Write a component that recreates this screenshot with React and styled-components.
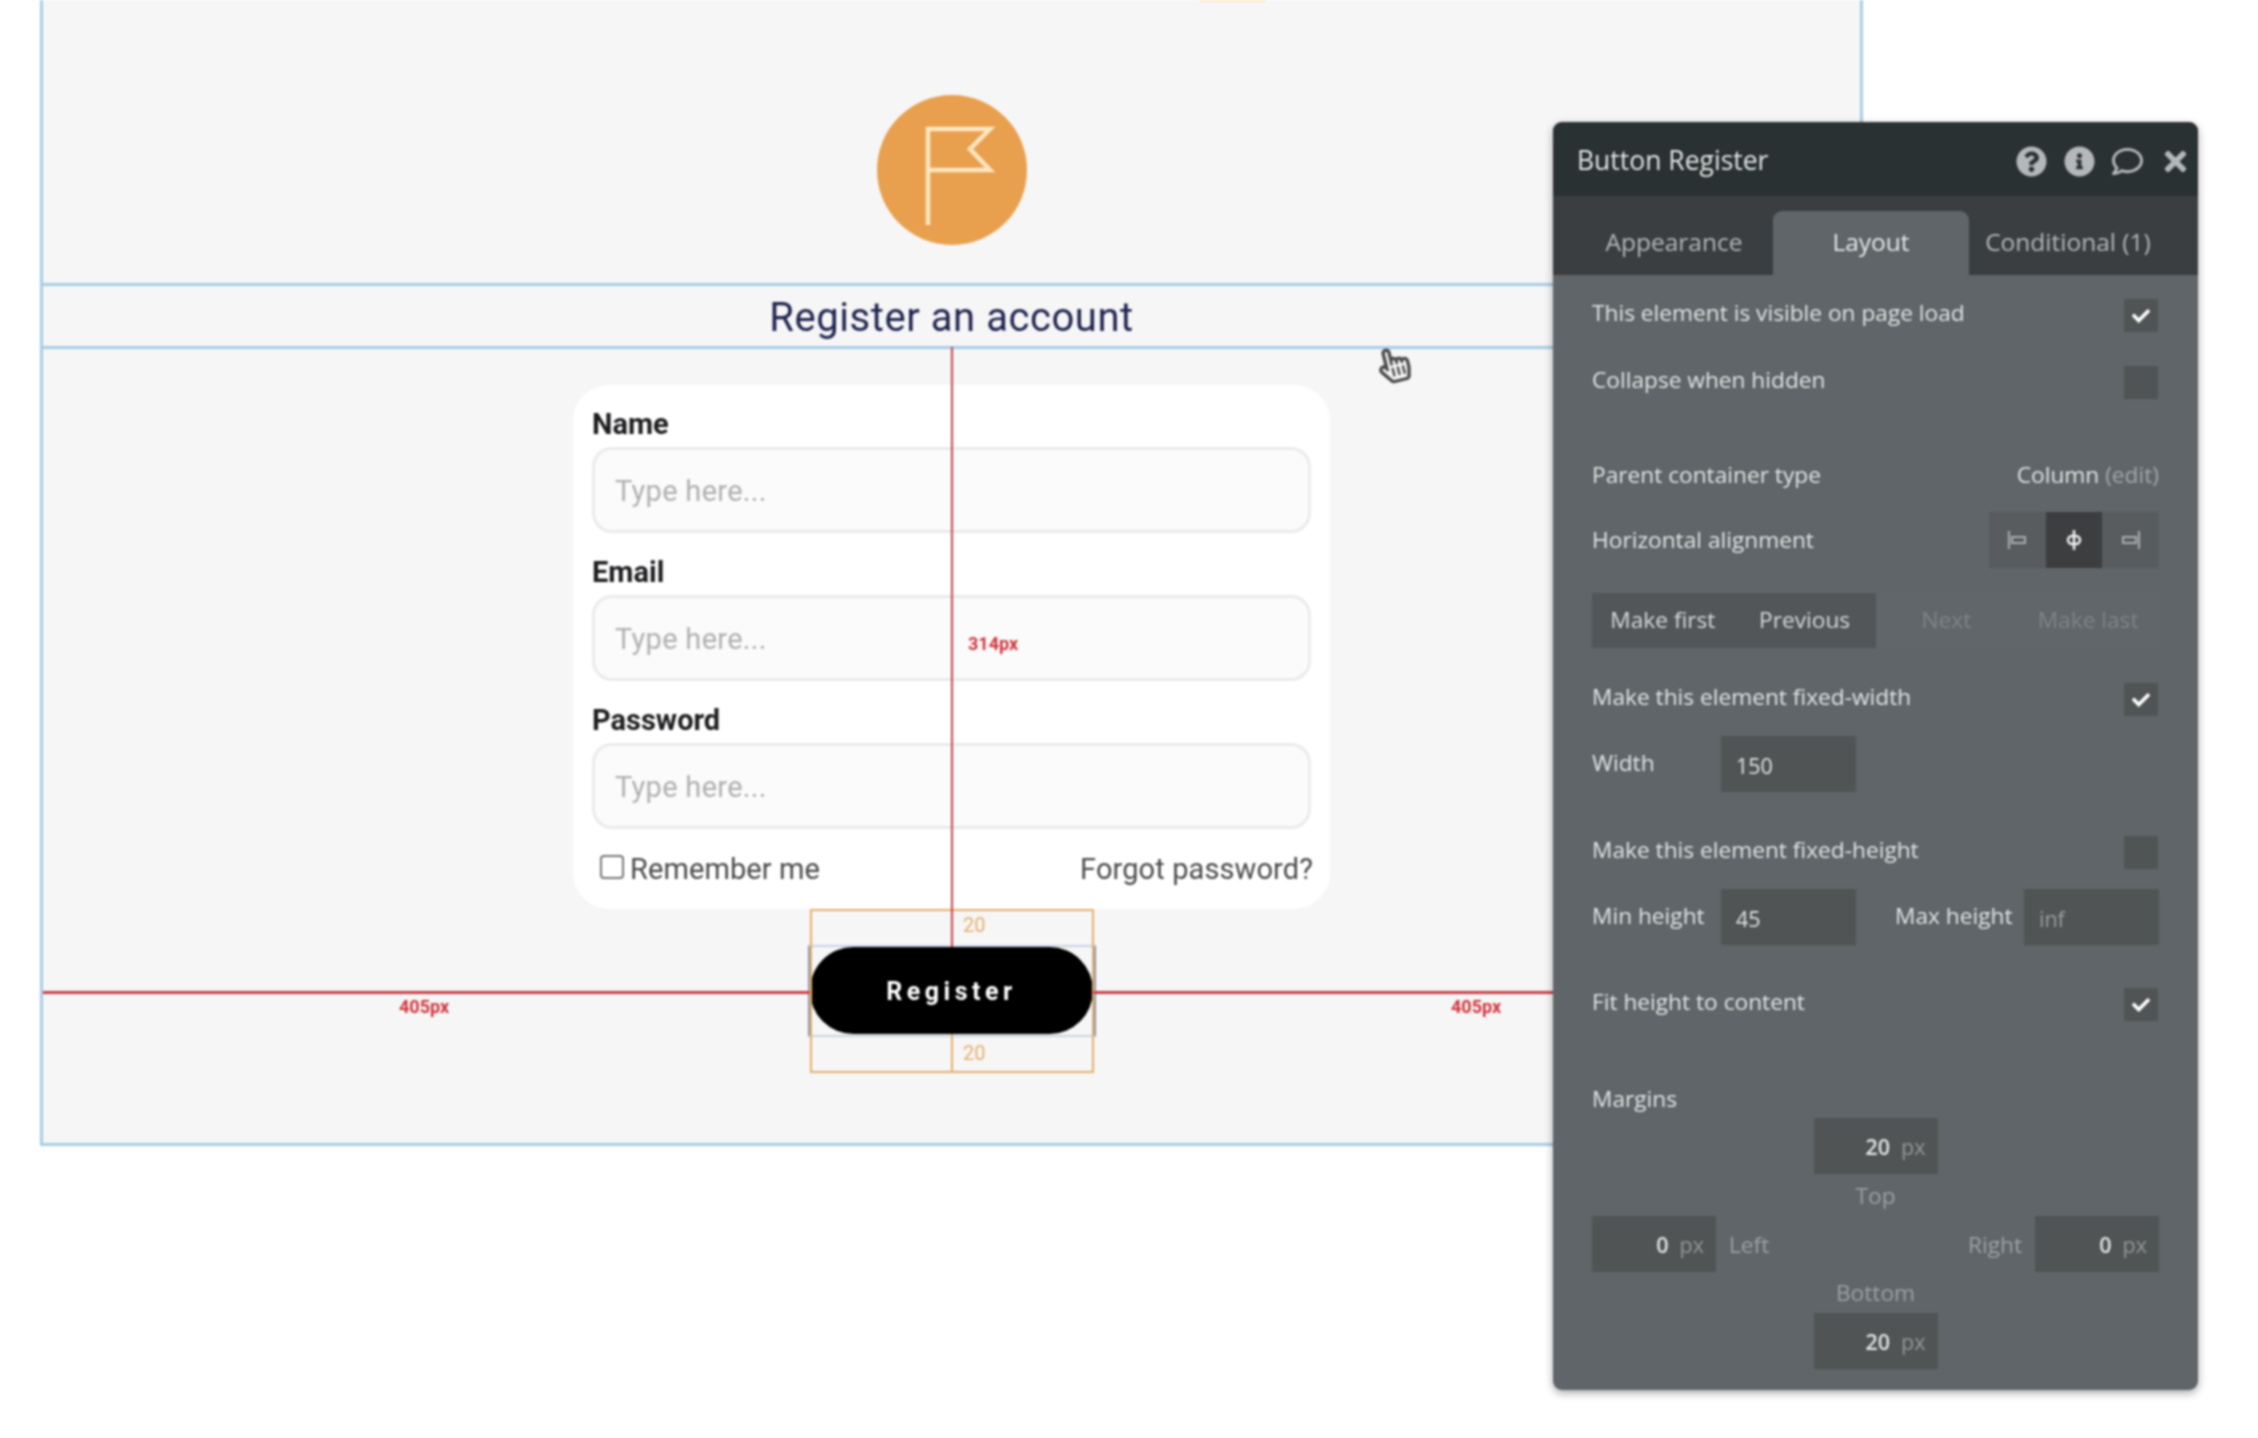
import React from 'react'
import styled, {createGlobalStyle} from 'styled-components'
import {FaCheck, FaInfoCircle, FaQuestionCircle, FaRegComment, FaRegHandPointer, FaTimes} from 'react-icons/fa'

const GlobalStyle = createGlobalStyle`
  html, body {
    margin: 0;
    padding: 0;
    background: #ffffff;
  }
  * {
    box-sizing: border-box;
  }
`;

const Page = styled.div`
  position: relative;
  width: 2258px;
  height: 1438px;
  overflow: hidden;
  background: #ffffff;
  font-family: "Roboto", "Liberation Sans", sans-serif;
  filter: blur(0.9px);
`;

/* ---------- editor canvas ---------- */

const Canvas = styled.div`
  position: relative;
  width: 1823px;
  height: 1146px;
  margin-left: 40px;
  background: #f6f6f6;
  border: solid #a8cde6;
  border-width: 0 3px 3px 3px;
`;

const TopSliver = styled.div`
  position: absolute;
  left: 1157px;
  top: 0;
  width: 66px;
  height: 2px;
  background: #fbe6c8;
`;

const LogoBand = styled.div`
  height: 283px;
  padding-top: 95px;
  display: flex;
  justify-content: center;
`;

const LogoCircle = styled.div`
  width: 150px;
  height: 150px;
  border-radius: 50%;
  background: #e9a04e;
  display: flex;
  align-items: center;
  justify-content: center;
`;

const TitleBand = styled.div`
  height: 66px;
  padding-top: 2px;
  border: solid #a8cde6;
  border-width: 3px 0;
  display: flex;
  align-items: center;
  justify-content: center;
`;

const Title = styled.h1`
  margin: 0;
  font-size: 40px;
  font-weight: 400;
  color: #20254f;
  letter-spacing: 0.55px;
`;

const FormBand = styled.div`
  padding-top: 36px;
  display: flex;
  flex-direction: column;
  align-items: center;
`;

const Card = styled.div`
  width: 757px;
  height: 524px;
  padding: 20px 19px 0 19px;
  border-radius: 36px;
  background: #ffffff;
`;

const FieldLabel = styled.div`
  height: 42px;
  line-height: 39px;
  font-size: 29px;
  font-weight: 700;
  color: #1d1d1f;
`;

const TextInput = styled.input`
  display: block;
  width: 100%;
  height: 86px;
  margin-bottom: 20px;
  padding: 2px 20px 0 20px;
  border: 3px solid #ebebeb;
  border-radius: 20px;
  background: #fbfbfb;
  font-family: inherit;
  font-size: 29px;
  letter-spacing: 0.3px;
  &::placeholder {
    color: #b0b0b0;
  }
`;

const CardFoot = styled.div`
  display: flex;
  align-items: center;
  justify-content: space-between;
  margin: 23px -2px 0 0;
  font-size: 29px;
  letter-spacing: 0.1px;
  color: #4a4a4a;
`;

const Remember = styled.label`
  display: flex;
  align-items: center;
  gap: 6px;
  padding-left: 8px;
`;

const RememberBox = styled.input.attrs({type: 'checkbox'})`
  appearance: none;
  width: 24px;
  height: 24px;
  margin: -4px 0 0 0;
  border: 2px solid #777777;
  border-radius: 4px;
  background: #ffffff;
`;

const RegisterButton = styled.button`
  width: 283px;
  height: 87px;
  margin-top: 38px;
  padding-top: 3px;
  border: 0;
  border-radius: 44px;
  background: #000000;
  color: #ffffff;
  font-family: inherit;
  font-size: 25px;
  font-weight: 700;
  letter-spacing: 4.5px;
`;

/* ---------- red / orange guides drawn over the canvas ---------- */

const RedLine = styled.div`
  position: absolute;
  background: #c9424a;
  left: ${p => p.$left}px;
  top: ${p => p.$top}px;
  width: ${p => p.$w}px;
  height: ${p => p.$h}px;
`;

const MarginBox = styled.div`
  position: absolute;
  left: 767px;
  top: 909px;
  width: 284px;
  height: 164px;
  border: 2px solid #e7ae6b;
`;

const ButtonFrame = styled.div`
  position: absolute;
  left: 765px;
  top: 945px;
  width: 288px;
  height: 92px;
  border: 2px solid #8d97a8;
  border-top-color: #c9d3e0;
  border-bottom-color: #c9d3e0;
  z-index: 0;
`;

const OrangeStem = styled.div`
  position: absolute;
  left: 908px;
  top: 1034px;
  width: 2px;
  height: 38px;
  background: #e7ae6b;
`;

const GuideText = styled.span`
  position: absolute;
  left: ${p => p.$left}px;
  top: ${p => p.$top}px;
  transform: translateY(-50%);
  font-size: ${p => p.$size || 18}px;
  font-weight: ${p => p.$weight || 700};
  color: ${p => p.$color || '#d2343c'};
  line-height: 1;
`;

const Cursor = styled.div`
  position: absolute;
  left: 1376px;
  top: 347px;
  color: #4a4a4a;
  font-size: 36px;
  line-height: 0;
  transform: rotate(-14deg);
`;

/* ---------- property panel ---------- */

const Panel = styled.div`
  position: absolute;
  left: 1553px;
  top: 122px;
  width: 645px;
  height: 1268px;
  border-radius: 9px;
  overflow: hidden;
  background: #5f6568;
  box-shadow: 0 3px 8px rgba(0, 0, 0, 0.35);
  font-family: "Open Sans", "Liberation Sans", sans-serif;
  color: #e3e5e5;
`;

const PanelHeader = styled.div`
  height: 74px;
  padding: 0 7px 0 24px;
  display: flex;
  align-items: center;
  justify-content: space-between;
  background: #2a3132;
`;

const PanelTitle = styled.div`
  padding-top: 2px;
  font-size: 26.5px;
  color: #e3e5e5;
`;

const HeaderIcons = styled.div`
  display: flex;
  align-items: center;
  gap: 17px;
  padding-top: 5px;
  color: #b4b8bb;
  font-size: 31px;
  svg {
    display: block;
  }
`;

const TabRow = styled.div`
  height: 79px;
  padding-top: 15px;
  display: flex;
  background: #3b3e40;
`;

const Tab = styled.div`
  width: ${p => p.$w}px;
  padding: 0 0 3px ${p => p.$pl || 0}px;
  display: flex;
  align-items: center;
  justify-content: center;
  font-size: 24.5px;
  border-radius: 9px 9px 0 0;
  color: ${p => p.$active ? '#e8eaea' : '#b4b8ba'};
  background: ${p => p.$active ? '#5f6568' : 'transparent'};
`;

const PanelBody = styled.div`
  padding: 24px 39px 0 39px;
`;

const Row = styled.div`
  display: flex;
  align-items: center;
  justify-content: space-between;
  height: ${p => p.$h || 33}px;
  margin-top: ${p => p.$mt || 0}px;
  padding-bottom: ${p => p.$lift || 0}px;
  font-size: 22.7px;
`;

const Check = styled.div`
  width: 34px;
  height: 33px;
  margin: 0 1px -6px 0;
  display: flex;
  align-items: center;
  justify-content: center;
  background: #505455;
  color: #ffffff;
  font-size: 18px;
`;

const Muted = styled.span`
  color: #a3a8aa;
`;

const AlignGroup = styled.div`
  display: flex;
  width: 170px;
  height: 56px;
  margin-bottom: -2px;
`;

const AlignButton = styled.div`
  flex: 1;
  display: flex;
  align-items: center;
  justify-content: center;
  background: ${p => p.$active ? '#3c3e40' : '#585c5f'};
  color: ${p => p.$active ? '#f0f0f0' : '#a9adaf'};
`;

const OrderRow = styled.div`
  display: grid;
  grid-template-columns: repeat(4, 1fr);
  height: 55px;
  margin-top: 25px;
`;

const OrderButton = styled.div`
  display: flex;
  align-items: center;
  justify-content: center;
  padding-bottom: 2px;
  font-size: 22.7px;
  background: ${p => p.$on ? '#525658' : '#606669'};
  color: ${p => p.$on ? '#d8dadb' : '#7f8487'};
`;

const FieldRow = styled.div`
  display: flex;
  align-items: center;
  height: 56px;
  margin-top: 20px;
  font-size: 22.7px;
`;

const FieldName = styled.div`
  width: ${p => p.$w}px;
  padding-left: ${p => p.$pl || 0}px;
  padding-bottom: 4px;
`;

const NumberBox = styled.div`
  width: 135px;
  height: 100%;
  padding-left: 15px;
  padding-top: 2px;
  display: flex;
  align-items: center;
  font-size: 21.5px;
  background: #505455;
  color: ${p => p.$dim ? '#9a9fa1' : '#e3e5e5'};
`;

const MarginCenter = styled.div`
  display: flex;
  justify-content: center;
  margin-top: ${p => p.$mt || 0}px;
`;

const MarginCaption = styled.div`
  height: ${p => p.$h}px;
  display: flex;
  align-items: center;
  justify-content: center;
  font-size: 22.7px;
  color: #9da2a4;
`;

const MarginSides = styled.div`
  display: flex;
  align-items: center;
  justify-content: space-between;
`;

const SideGroup = styled.div`
  display: flex;
  align-items: center;
  gap: 13px;
  font-size: 22.7px;
  color: #9da2a4;
`;

const PxBox = styled.div`
  width: 124px;
  height: 56px;
  padding-right: 12px;
  display: flex;
  align-items: center;
  justify-content: flex-end;
  gap: 11px;
  background: #505455;
  font-size: 21.5px;
  font-weight: 600;
  color: #e3e5e5;
  span {
    font-weight: 400;
    color: #93989a;
  }
`;

const AlignIcon = ({kind}) => (
  <svg width="24" height="24" viewBox="0 0 24 24" fill="none" stroke="currentColor" strokeWidth="2">
    {kind === 'left' && <><path d="M4 3v18" /><rect x="7" y="9" width="13" height="6" /></>}
    {kind === 'center' && <><path d="M12 2v20" strokeWidth="2.5" /><rect x="6" y="8" width="12" height="8" rx="4" strokeWidth="2.5" /></>}
    {kind === 'right' && <><path d="M20 3v18" /><rect x="4" y="9" width="13" height="6" /></>}
  </svg>
);

const PxField = ({value}) => (
  <PxBox>{value}<span>px</span></PxBox>
);

const fields = ['Name', 'Email', 'Password'];

export default function App() {
  return (
    <Page>
      <GlobalStyle />
      <Canvas>
        <TopSliver />
        <LogoBand>
          <LogoCircle>
            <svg width="150" height="150" viewBox="0 0 150 150" fill="none" stroke="#fde6c0" strokeWidth="4.5">
              <path d="M51 130V34H113L93 54L113 75H51" />
            </svg>
          </LogoCircle>
        </LogoBand>
        <TitleBand>
          <Title>Register an account</Title>
        </TitleBand>
        <FormBand>
          <Card>
            {fields.map((field) => (
              <div key={field}>
                <FieldLabel>{field}</FieldLabel>
                <TextInput placeholder="Type here..." />
              </div>
            ))}
            <CardFoot>
              <Remember><RememberBox />Remember me</Remember>
              <span>Forgot password?</span>
            </CardFoot>
          </Card>
          <RegisterButton>Register</RegisterButton>
        </FormBand>
        <ButtonFrame />
        <MarginBox />
        <RedLine $left={908} $top={347} $w={2} $h={600} />
        <RedLine $left={0} $top={991} $w={767} $h={3} />
        <RedLine $left={1050} $top={991} $w={470} $h={3} />
        <OrangeStem />
        <GuideText $left={925} $top={644}>314px</GuideText>
        <GuideText $left={356} $top={1007}>405px</GuideText>
        <GuideText $left={1408} $top={1007}>405px</GuideText>
        <GuideText $left={920} $top={925} $color="#e7ae6b" $weight={400} $size={20}>20</GuideText>
        <GuideText $left={920} $top={1053} $color="#e7ae6b" $weight={400} $size={20}>20</GuideText>
      </Canvas>
      <Cursor><FaRegHandPointer /></Cursor>

      <Panel>
        <PanelHeader>
          <PanelTitle>Button Register</PanelTitle>
          <HeaderIcons>
            <FaQuestionCircle />
            <FaInfoCircle />
            <FaRegComment />
            <FaTimes />
          </HeaderIcons>
        </PanelHeader>
        <TabRow>
          <Tab $w={220} $pl={22}>Appearance</Tab>
          <Tab $w={196} $active>Layout</Tab>
          <Tab $w={196} $pl={2}>Conditional (1)</Tab>
        </TabRow>
        <PanelBody>
          <Row $lift={6}>This element is visible on page load<Check><FaCheck /></Check></Row>
          <Row $mt={34} $lift={6}>Collapse when hidden<Check /></Row>
          <Row $mt={60} $lift={2}>Parent container type<span>Column <Muted>(edit)</Muted></span></Row>
          <Row $mt={20} $h={56} $lift={2}>
            Horizontal alignment
            <AlignGroup>
              <AlignButton><AlignIcon kind="left" /></AlignButton>
              <AlignButton $active><AlignIcon kind="center" /></AlignButton>
              <AlignButton><AlignIcon kind="right" /></AlignButton>
            </AlignGroup>
          </Row>
          <OrderRow>
            <OrderButton $on>Make first</OrderButton>
            <OrderButton $on>Previous</OrderButton>
            <OrderButton>Next</OrderButton>
            <OrderButton>Make last</OrderButton>
          </OrderRow>
          <Row $mt={35} $lift={6}>Make this element fixed-width<Check><FaCheck /></Check></Row>
          <FieldRow>
            <FieldName $w={129}>Width</FieldName>
            <NumberBox>150</NumberBox>
          </FieldRow>
          <Row $mt={44} $lift={6}>Make this element fixed-height<Check /></Row>
          <FieldRow>
            <FieldName $w={129}>Min height</FieldName>
            <NumberBox>45</NumberBox>
            <FieldName $w={168} $pl={39}>Max height</FieldName>
            <NumberBox $dim>inf</NumberBox>
          </FieldRow>
          <Row $mt={43} $lift={6}>Fit height to content<Check><FaCheck /></Check></Row>
          <Row $mt={63} $lift={5}>Margins</Row>
          <MarginCenter $mt={1}><PxField value="20" /></MarginCenter>
          <MarginCaption $h={42}>Top</MarginCaption>
          <MarginSides>
            <SideGroup><PxField value="0" />Left</SideGroup>
            <SideGroup>Right<PxField value="0" /></SideGroup>
          </MarginSides>
          <MarginCaption $h={41}>Bottom</MarginCaption>
          <MarginCenter><PxField value="20" /></MarginCenter>
        </PanelBody>
      </Panel>
    </Page>
  )
}
